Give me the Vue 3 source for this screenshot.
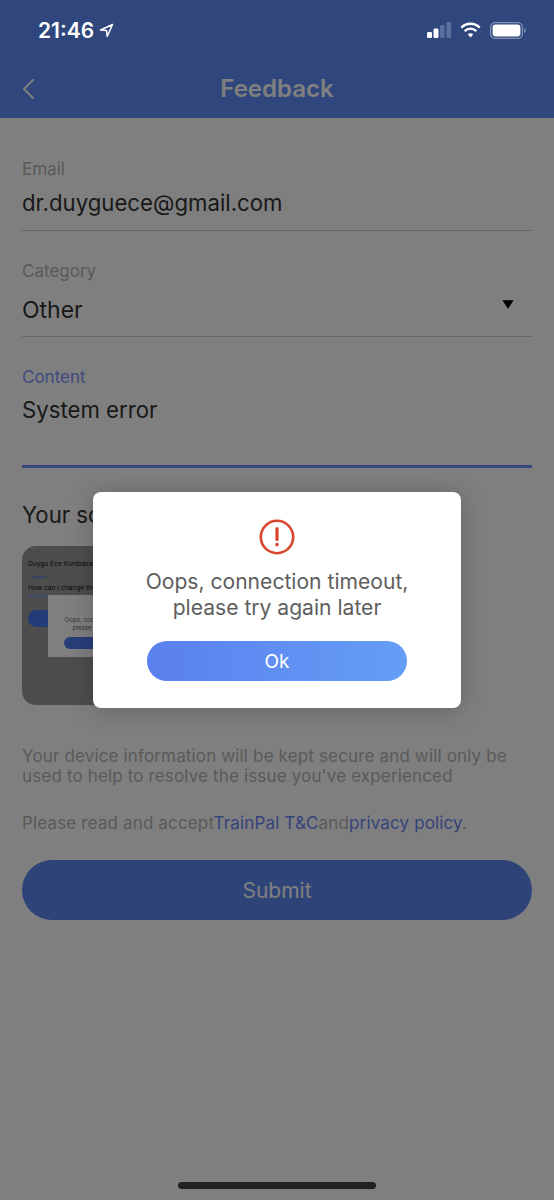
<script setup>
const fields = [
  { label: 'Email', value: 'dr.duyguece@gmail.com' },
  { label: 'Category', value: 'Other', select: true },
]
</script>

<template>
  <div class="phone">
    <header class="header">
      <div class="status-spacer"></div>
      <div class="nav">
        <svg class="back" width="14" height="22" viewBox="0 0 14 22" fill="none">
          <path d="M12 2 L3 11 L12 20" stroke="#ffffff" stroke-opacity=".95" stroke-width="2.2" stroke-linecap="round" stroke-linejoin="round" />
        </svg>
        <h1 class="title">Feedback</h1>
      </div>
    </header>

    <main class="form">
      <section v-for="f in fields" :key="f.label" class="field" :class="{ 'field-select': f.select }">
        <div class="label">{{ f.label }}</div>
        <div class="value-row">
          <span class="value">{{ f.value }}</span>
          <svg v-if="f.select" class="caret" width="12" height="9" viewBox="0 0 12 9">
            <path d="M0.3 0.3 H11.7 L6 8.7 Z" fill="#000" />
          </svg>
        </div>
      </section>

      <section class="field field-content">
        <div class="label label-active">Content</div>
        <div class="value">System error</div>
      </section>

      <h2 class="shot-title">Your screenshot</h2>
      <div class="thumb">
        <div class="thumb-label">Email</div>
        <div class="thumb-text">Duygu Ece Kumbasar</div>
        <div class="thumb-label thumb-blue">Content</div>
        <div class="thumb-text thumb-ruled">How can I change the</div>
        <div class="thumb-btn"></div>
        <div class="thumb-modal">
          <div class="thumb-msg">Oops, connection timeout,<br />please try again later</div>
          <div class="thumb-ok"></div>
        </div>
      </div>

      <p class="note">Your device information will be kept secure and will only be used to help to resolve the issue you've experienced</p>
      <p class="terms">Please read and accept<a>TrainPal T&amp;C</a>and<a>privacy policy</a>.</p>
      <button class="submit">Submit</button>
    </main>

    <div class="overlay">
      <div class="modal">
        <svg class="alert" width="36" height="36" viewBox="0 0 36 36" fill="none">
          <circle cx="18" cy="18" r="16.2" stroke="#d9452e" stroke-width="2.6" />
          <path d="M18 9.5 V20.5" stroke="#d9452e" stroke-width="3.2" stroke-linecap="round" />
          <circle cx="18" cy="25.6" r="1.8" fill="#d9452e" />
        </svg>
        <p class="msg">Oops, connection timeout,<br />please try again later</p>
        <button class="ok">Ok</button>
      </div>
    </div>

    <div class="status">
      <div class="time">
        <span>21:46</span>
        <svg width="15" height="15" viewBox="0 0 15 15" fill="none">
          <path d="M13.5 1.5 L1.5 7 L7.6 7.6 L8.2 13.5 Z" stroke="#fff" stroke-width="1.5" stroke-linejoin="round" />
        </svg>
      </div>
      <div class="status-icons">
        <svg width="24" height="16" viewBox="0 0 24 16">
          <rect x="0" y="10" width="5" height="6" rx="1.2" fill="#fff" />
          <rect x="6.5" y="6.5" width="5" height="9.5" rx="1.2" fill="#fff" />
          <rect x="13" y="3" width="4.6" height="13" rx="1.2" fill="#5d6f9c" />
          <rect x="19.4" y="0" width="4.6" height="16" rx="1.2" fill="#5d6f9c" />
        </svg>
        <svg width="21" height="16" viewBox="0 0 20 15" fill="none">
          <path d="M1.2 5.2 C6.5 0.4 13.5 0.4 18.8 5.2" stroke="#fff" stroke-width="2.3" />
          <path d="M4.4 8.6 C7.8 5.6 12.2 5.6 15.6 8.6" stroke="#fff" stroke-width="2.3" />
          <path d="M7.4 11.6 L10 14.6 L12.6 11.6 C11 10.3 9 10.3 7.4 11.6 Z" fill="#fff" />
        </svg>
        <svg width="36" height="17" viewBox="0 0 36 17" fill="none">
          <rect x="0.6" y="0.6" width="31.8" height="15.8" rx="4.6" stroke="#8593b5" stroke-width="1.2" />
          <rect x="2.6" y="2.6" width="27.8" height="11.8" rx="2.8" fill="#fff" />
          <path d="M34 6 C35.2 6.5 35.6 7.4 35.6 8.5 C35.6 9.6 35.2 10.5 34 11 Z" fill="#8593b5" />
        </svg>
      </div>
    </div>

    <div class="home-bar"></div>
  </div>
</template>

<style scoped>
.phone {
  position: relative;
  width: 554px;
  height: 1200px;
  overflow: hidden;
  background: #fff;
  font-family: Inter, "Liberation Sans", sans-serif;
}
.header {
  height: 118px;
  background: #608efa;
  display: flex;
  flex-direction: column;
}
.status-spacer { height: 60px; }
.nav {
  height: 58px;
  display: flex;
  align-items: center;
  justify-content: center;
  position: relative;
}
.back { position: absolute; left: 21px; top: 18px; }
.title {
  margin: 0;
  font-size: 24px;
  font-weight: 600;
  color: #fff;
  line-height: 58px;
}
.form { padding: 41px 22px 0; }
.field { height: 71px; border-bottom: 1px solid #cfcfcf; margin-bottom: 30px; }
.label { font-size: 17px; line-height: 20px; color: #b4b4b4; }
.label-active { color: #7d95ff; }
.value-row { display: flex; justify-content: space-between; align-items: flex-start; }
.value { font-size: 22.2px; line-height: 32px; color: #333; margin-top: 8px; display: block; }
.field-select { height: 75px; margin-bottom: 30px; }
.field-select .value { margin-top: 13px; font-size: 23px; }
.caret { margin: 19px 18px 0 0; }
.field-content { height: 98px; border-bottom: 3px solid #6f8cf8; margin-bottom: 31px; }
.field-content .value { margin-top: 7px; }
.shot-title { margin: 0 0 15px; font-size: 22.2px; line-height: 32px; font-weight: 400; color: #333; }
.thumb {
  position: relative;
  width: 240px;
  height: 159px;
  border-radius: 14px;
  background: #9a9a9a;
  overflow: hidden;
  padding: 2px 6px;
  box-sizing: border-box;
}
.thumb-label { font-size: 5px; line-height: 6px; color: #8a8a8a; }
.thumb-blue { color: #5f78d8; margin-top: 5px; }
.thumb-text { font-size: 6.6px; line-height: 10px; color: #111; margin-top: 5px; }
.thumb-ruled { border-bottom: 1px solid #6f8cf8; padding-bottom: 3px; margin-top: 3px; }
.thumb-btn { width: 210px; height: 17px; border-radius: 9px; background: #4678f0; margin-top: 13px; }
.thumb-modal {
  position: absolute;
  left: 26px;
  top: 49px;
  width: 110px;
  height: 62px;
  background: #fff;
  text-align: center;
  overflow: hidden;
}
.thumb-msg { font-size: 6.2px; line-height: 8px; color: #666; margin-top: 21px; white-space: nowrap; }
.thumb-ok { margin: 5px 16px 0; height: 12px; border-radius: 6px; background: #4e7cf0; }
.note { margin: 41px 0 0; font-size: 17px; line-height: 20px; color: #b4b4b4; letter-spacing: 0.15px; }
.terms { margin: 27px 0 0; font-size: 17px; line-height: 20px; color: #b4b4b4; letter-spacing: 0.15px; }
.terms a { color: #6b87f8; }
.submit {
  display: block;
  width: 510px;
  height: 60px;
  margin-top: 27px;
  border: 0;
  border-radius: 30px;
  background: #5c88f0;
  color: #fff;
  font: 400 21px Inter, "Liberation Sans", sans-serif;
}
.overlay {
  position: absolute;
  inset: 0;
  background: rgba(0, 0, 0, .5);
  display: flex;
  align-items: center;
  justify-content: center;
}
.modal {
  width: 368px;
  height: 216px;
  box-sizing: border-box;
  background: #fff;
  border-radius: 8px;
  box-shadow: 0 2px 26px rgba(0, 0, 0, .22);
  display: flex;
  flex-direction: column;
  align-items: center;
  padding-top: 27px;
}
.msg { margin: 14px 0 0; font-size: 21.1px; line-height: 26px; text-align: center; color: #5e5e5e; }
.ok {
  width: 260px;
  height: 40px;
  margin-top: 20px;
  border: 0;
  border-radius: 20px;
  background: linear-gradient(90deg, #5a7fee, #659ef6);
  color: #fff;
  font: 400 19px Inter, "Liberation Sans", sans-serif;
}
.status {
  position: absolute;
  left: 38px;
  right: 28px;
  top: 16px;
  height: 28px;
  display: flex;
  align-items: center;
  justify-content: space-between;
}
.time { display: flex; align-items: center; gap: 5px; color: #fff; font-size: 21px; font-weight: 600; }
.status-icons { display: flex; align-items: center; gap: 9px; }
.home-bar {
  position: absolute;
  left: 178px;
  bottom: 11px;
  width: 198px;
  height: 7px;
  border-radius: 4px;
  background: #222;
}
</style>
